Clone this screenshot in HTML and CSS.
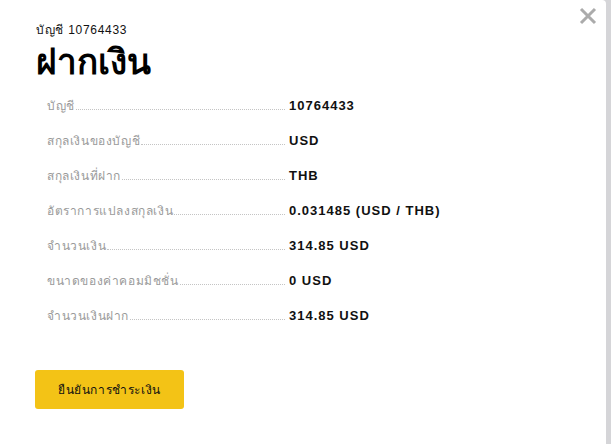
FILE: index.html
```html
<!DOCTYPE html>
<html lang="th">
<head>
<meta charset="utf-8">
<link rel="stylesheet" href="styles.css">
</head>
<body>
<div class="modal">
  <button class="close" aria-label="close">
    <svg width="18" height="18" viewBox="0 0 18 18"><path d="M2 2L16 16M16 2L2 16" stroke="#ababab" stroke-width="3" stroke-linecap="butt"/></svg>
  </button>
  <div class="sub">บัญชี 10764433</div>
  <h1 class="title">ฝากเงิน</h1>
  <div class="rows">
    <div class="row"><span class="label">บัญชี</span><span class="value">10764433</span></div>
    <div class="row"><span class="label">สกุลเงินของบัญชี</span><span class="value">USD</span></div>
    <div class="row"><span class="label">สกุลเงินที่ฝาก</span><span class="value">THB</span></div>
    <div class="row"><span class="label">อัตราการแปลงสกุลเงิน</span><span class="value">0.031485 (USD / THB)</span></div>
    <div class="row"><span class="label">จำนวนเงิน</span><span class="value">314.85 USD</span></div>
    <div class="row"><span class="label">ขนาดของค่าคอมมิชชั่น</span><span class="value">0 USD</span></div>
    <div class="row"><span class="label">จำนวนเงินฝาก</span><span class="value">314.85 USD</span></div>
  </div>
  <button class="confirm">ยืนยันการชำระเงิน</button>
</div>
</body>
</html>
```
FILE: styles.css
```css
html, body {
  margin: 0;
  padding: 0;
  height: 100%;
}
body {
  background: #d5d5d8;
  font-family: "Liberation Sans", Arial, sans-serif;
  overflow: hidden;
}
.modal {
  position: relative;
  width: 606px;
  height: 444px;
  background: #fff;
  border-top-right-radius: 4px;
  box-sizing: border-box;
  padding: 22px 0 0 36px;
}
.close {
  position: absolute;
  top: 7px;
  right: 9px;
  border: 0;
  background: none;
  padding: 0;
  width: 18px;
  height: 18px;
  cursor: pointer;
}
.close svg { display: block; }
.sub {
  font-size: 12px;
  color: #111;
  letter-spacing: 0.7px;
  line-height: 16px;
}
.title {
  margin: 4px 0 0 0;
  font-size: 35px;
  font-weight: bold;
  line-height: 40px;
  color: #000;
}
.rows {
  margin: 15px 0 0 11px;
  display: flex;
  flex-direction: column;
  gap: 17px;
}
.row {
  display: grid;
  grid-template-columns: 238px auto;
  column-gap: 4px;
  align-items: baseline;
  height: 18px;
  line-height: 18px;
  font-size: 12px;
}
.label {
  display: flex;
  align-items: baseline;
  color: #9a9a9a;
  letter-spacing: 0.6px;
}
.label::after {
  content: "";
  flex: 1;
  border-bottom: 1px dotted #c4c4c4;
  margin-left: 1px;
}
.value {
  font-weight: bold;
  color: #111;
  font-size: 13px;
  letter-spacing: 1px;
}
.confirm {
  display: block;
  margin-top: 45px;
  margin-left: -1px;
  width: 149px;
  height: 39px;
  background: #f3c316;
  border: 0;
  border-radius: 3px;
  font-family: "Liberation Sans", Arial, sans-serif;
  font-size: 12px;
  letter-spacing: 0.6px;
  color: #111;
  cursor: pointer;
}
```
